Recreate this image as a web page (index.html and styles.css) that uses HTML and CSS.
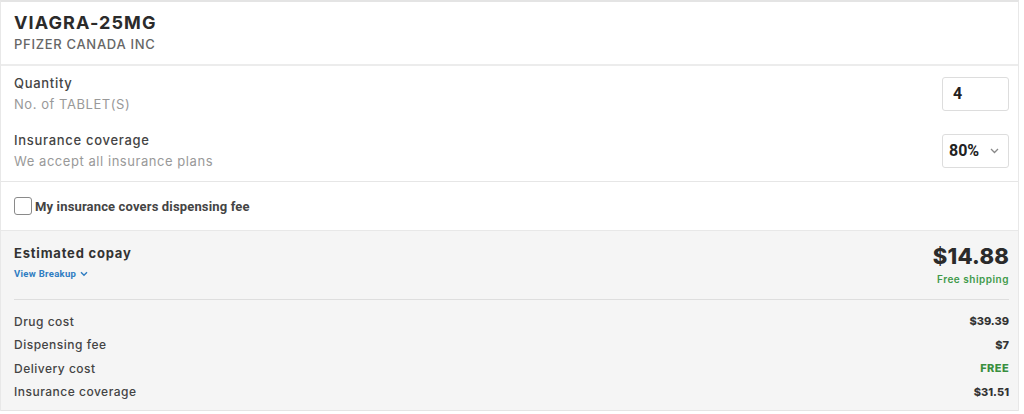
FILE: index.html
```html
<!DOCTYPE html>
<html lang="en">
<head>
    <meta charset="UTF-8">
    <meta name="viewport" content="width=device-width, initial-scale=1.0">
    <title>Copay Estimate</title>
    <link rel="stylesheet" href="styles.css">
</head>
<body>
    <div class="card">
        <div class="drug-header">
            <h2>VIAGRA-25MG</h2>
            <div class="maker">PFIZER CANADA INC</div>
        </div>

        <div class="options">
            <div class="option-row">
                <div>
                    <div class="option-label">Quantity</div>
                    <div class="option-hint">No. of TABLET(S)</div>
                </div>
                <input type="text" class="qty-input" value="4">
            </div>
            <div class="option-row">
                <div>
                    <div class="option-label">Insurance coverage</div>
                    <div class="option-hint">We accept all insurance plans</div>
                </div>
                <div class="coverage-select">
                    <span>80%</span>
                    <svg width="9" height="6" viewBox="0 0 9 6"><path d="M1 1l3.5 3.5L8 1" fill="none" stroke="#888" stroke-width="1.3"/></svg>
                </div>
            </div>
        </div>

        <label class="fee-check">
            <input type="checkbox">
            <span>My insurance covers dispensing fee</span>
        </label>

        <div class="copay">
            <div class="copay-top">
                <div>
                    <div class="copay-title">Estimated copay</div>
                    <a class="breakup-link" href="#">View Breakup
                        <svg width="8" height="6" viewBox="0 0 8 6"><path d="M1 1.2l3 3 3-3" fill="none" stroke="#2f7dc2" stroke-width="1.4"/></svg>
                    </a>
                </div>
                <div class="copay-total">
                    <div class="total-amount">$14.88</div>
                    <div class="shipping">Free shipping</div>
                </div>
            </div>

            <div class="breakup">
                <div class="breakup-row"><span>Drug cost</span><b>$39.39</b></div>
                <div class="breakup-row"><span>Dispensing fee</span><b>$7</b></div>
                <div class="breakup-row"><span>Delivery cost</span><b class="free">FREE</b></div>
                <div class="breakup-row"><span>Insurance coverage</span><b>$31.51</b></div>
            </div>
        </div>
    </div>
</body>
</html>
```

FILE: styles.css
```css
body {
    font-family: Inter, 'Open Sans', sans-serif;
    background-color: #ffffff;
    margin: 0;
    padding: 0;
    color: #333333;
}

.card {
    width: 1017px;
    border: 1px solid #e8e8e8;
    border-top: 2px solid #e4e4e4;
    border-bottom: none;
}

.drug-header {
    padding: 11px 13px 12px;
    border-bottom: 2px solid #ececec;
}

h2 {
    margin: 0;
    font-size: 18px;
    line-height: 20px;
    font-weight: 700;
    color: #2b2b2b;
    letter-spacing: 1.1px;
}

.maker {
    margin-top: 3px;
    font-size: 13px;
    line-height: 16px;
    font-weight: 500;
    color: #666666;
    letter-spacing: 0.7px;
}

.options {
    padding: 9px 9px 12px 13px;
    border-bottom: 1px solid #e6e6e6;
    display: flex;
    flex-direction: column;
    gap: 20px;
}

.option-row {
    display: flex;
    justify-content: space-between;
    align-items: center;
}

.option-label {
    font-size: 13px;
    line-height: 16px;
    font-weight: 500;
    color: #444444;
    letter-spacing: 0.7px;
}

.option-hint {
    margin-top: 5px;
    font-size: 13px;
    line-height: 16px;
    color: #999999;
    letter-spacing: 0.55px;
}

.qty-input {
    width: 67px;
    height: 34px;
    box-sizing: border-box;
    border: 1px solid #dddddd;
    border-radius: 3px;
    padding: 0 10px;
    font-family: Roboto, sans-serif;
    font-size: 16px;
    font-weight: 700;
    color: #222222;
}

.coverage-select {
    width: 67px;
    height: 34px;
    box-sizing: border-box;
    border: 1px solid #dddddd;
    border-radius: 3px;
    padding: 0 9px 0 6px;
    display: flex;
    justify-content: space-between;
    align-items: center;
    font-family: Roboto, sans-serif;
    font-size: 16px;
    font-weight: 700;
    color: #222222;
}

.fee-check {
    display: flex;
    align-items: center;
    gap: 3px;
    height: 48px;
    padding: 0 13px;
    border-bottom: 1px solid #e8e8e8;
    font-family: Roboto, sans-serif;
    font-size: 13px;
    font-weight: 700;
    color: #444444;
    letter-spacing: 0.15px;
}

.fee-check input {
    appearance: none;
    margin: 0;
    width: 18px;
    height: 18px;
    border: 1px solid #8a8a8a;
    border-radius: 3px;
    background-color: #ffffff;
}

.copay {
    background-color: #f5f5f5;
    padding: 0 9px 10px 13px;
    border-bottom: 1px solid #e4e4e4;
}

.copay-top {
    display: flex;
    justify-content: space-between;
    align-items: flex-start;
    padding: 14px 0 14px;
    border-bottom: 1px solid #dedede;
}

.copay-title {
    font-size: 13px;
    line-height: 16px;
    font-weight: 700;
    color: #333333;
    letter-spacing: 0.8px;
}

.breakup-link {
    display: inline-flex;
    align-items: center;
    gap: 4px;
    margin-top: 7px;
    font-family: Roboto, sans-serif;
    font-size: 9.5px;
    line-height: 11px;
    font-weight: 700;
    color: #2f7dc2;
    letter-spacing: 0.3px;
    text-decoration: none;
}

.copay-total {
    margin-top: -2px;
    text-align: right;
}

.total-amount {
    font-size: 22px;
    line-height: 26px;
    font-weight: 800;
    color: #2b2b2b;
    letter-spacing: 0.2px;
}

.shipping {
    margin-top: 4px;
    font-size: 10px;
    line-height: 12px;
    font-weight: 600;
    color: #3f9a4a;
    letter-spacing: 0.5px;
}

.breakup {
    padding-top: 13px;
    display: flex;
    flex-direction: column;
    gap: 7.5px;
}

.breakup-row {
    display: flex;
    justify-content: space-between;
    align-items: center;
    height: 16px;
    font-size: 12px;
    font-weight: 500;
    color: #444444;
    letter-spacing: 0.5px;
}

.breakup-row b {
    font-size: 11px;
    font-weight: 800;
    color: #333333;
    letter-spacing: 0;
}

.breakup-row .free {
    color: #3a8f3f;
    letter-spacing: 0.4px;
}
```
